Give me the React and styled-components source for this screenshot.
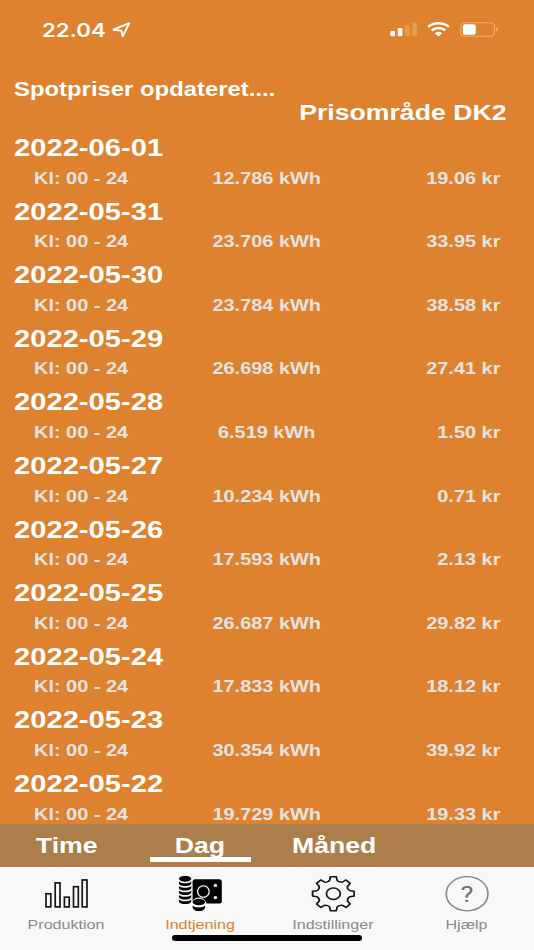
import React, { useState } from 'react'
import styled, { createGlobalStyle } from 'styled-components'

const days = [
  { date: '2022-06-01', energy: '12.786', price: '19.06' },
  { date: '2022-05-31', energy: '23.706', price: '33.95' },
  { date: '2022-05-30', energy: '23.784', price: '38.58' },
  { date: '2022-05-29', energy: '26.698', price: '27.41' },
  { date: '2022-05-28', energy: '6.519', price: '1.50' },
  { date: '2022-05-27', energy: '10.234', price: '0.71' },
  { date: '2022-05-26', energy: '17.593', price: '2.13' },
  { date: '2022-05-25', energy: '26.687', price: '29.82' },
  { date: '2022-05-24', energy: '17.833', price: '18.12' },
  { date: '2022-05-23', energy: '30.354', price: '39.92' },
  { date: '2022-05-22', energy: '19.729', price: '19.33' },
]

const periods = ['Time', 'Dag', 'Måned']

const LocationIcon = () => (
  <svg width="19" height="16" viewBox="0 0 19 16">
    <path d="M17.3 1.2 L10.6 14.2 L9.4 8.6 L1.4 7.7 Z" fill="none" stroke="#fff" strokeWidth="1.9" strokeLinejoin="round" />
  </svg>
)

const SignalIcon = () => (
  <svg width="27" height="15" viewBox="0 0 27 15" fill="#fff">
    <rect x="0.3" y="9" width="4.7" height="5.3" rx="1.1" />
    <rect x="7.7" y="6" width="4.7" height="8.3" rx="1.1" />
    <rect x="15" y="3" width="4.7" height="11.3" rx="1.1" fill="#e69b4d" />
    <rect x="22.2" y="0.3" width="4.7" height="14" rx="1.1" fill="#e69b4d" />
  </svg>
)

const WifiIcon = () => (
  <svg width="23" height="15" viewBox="0 0 23 15" fill="none" stroke="#fff" strokeWidth="2.5">
    <path d="M1.1 4.9 C6.8 0.1 16.2 0.1 21.9 4.9" />
    <path d="M4.7 8.4 C8.6 5.3 14.4 5.3 18.3 8.4" />
    <path d="M7.7 11.2 C10 9.3 13 9.3 15.3 11.2 L11.5 14.5 Z" fill="#fff" stroke="none" />
  </svg>
)

const BatteryIcon = () => (
  <svg width="39" height="15" viewBox="0 0 39 15">
    <rect x="0.7" y="0.7" width="33.8" height="13.5" rx="4" fill="none" stroke="#edb06e" strokeWidth="1.1" />
    <rect x="2.8" y="2.2" width="13" height="10.6" rx="2.3" fill="#fff" />
    <path d="M36 5.3 C38.2 6 38.2 9 36 9.7 Z" fill="#edb06e" />
  </svg>
)

const ChartIcon = () => (
  <svg width="44" height="36" viewBox="-0.6 0 44 36" fill="none" stroke="#161616" strokeWidth="1.7">
    <rect x="1.4" y="17.8" width="4.8" height="13.1" />
    <rect x="10.6" y="6.9" width="4.8" height="24" />
    <rect x="19.8" y="21.2" width="4.8" height="9.7" />
    <rect x="28.9" y="10.7" width="4.8" height="20.2" />
    <rect x="37.6" y="4" width="4.8" height="26.9" />
  </svg>
)

const MoneyIcon = () => (
  <svg width="44" height="36" viewBox="0 0 44 36">
    <rect x="14.6" y="3.2" width="29.2" height="24.3" rx="2.6" fill="#000" />
    <ellipse cx="25.4" cy="15.6" rx="5.8" ry="5.7" fill="none" stroke="#f8f8f8" strokeWidth="1.3" />
    <circle cx="37.4" cy="9.4" r="1.7" fill="#f8f8f8" />
    <circle cx="37.4" cy="21.6" r="1.7" fill="#f8f8f8" />
    <ellipse cx="7.1" cy="2.8" rx="6.2" ry="2.9" />
    {[5.4, 9.9, 14.4, 18.9, 23.4].map(y => (
      <path key={y} d={`M0.9 ${y} C2.4 ${y + 2.4} 11.8 ${y + 2.4} 13.3 ${y} V${y + 2} C12.4 ${y + 5.6} 1.8 ${y + 5.6} 0.9 ${y + 2} Z`} />
    ))}
    <ellipse cx="20.9" cy="29" rx="7.8" ry="7.4" fill="#f8f8f8" />
    <ellipse cx="20.9" cy="26" rx="6.2" ry="3.2" />
    <path d="M14.7 29.6 C16 32.2 25.8 32.2 27.1 29.6 V31.4 C26.3 36.3 15.5 36.3 14.7 31.4 Z" />
  </svg>
)

// the same tooth repeated eight times around the centre
const gearPath = () => {
  const point = (x, y, angle) => {
    const px = x * Math.cos(angle) - y * Math.sin(angle)
    const py = x * Math.sin(angle) + y * Math.cos(angle)
    return `${px.toFixed(2)} ${py.toFixed(2)}`
  }
  let d = ''
  for (let i = 0; i < 8; i++) {
    const a = i * Math.PI / 4
    d += `${i === 0 ? 'M' : 'L'}${point(-2.4, -17, a)} L${point(2.4, -17, a)} L${point(3, -13.6, a)} `
    d += `Q${point(3.2, -12.6, a)} ${point(4.9, -11.9, a)} `
    d += `Q${point(6.3, -11.4, a)} ${point(7.5, -11.7, a)} `
  }
  return d + 'Z'
}

const GearIcon = () => (
  <svg width="44" height="36" viewBox="-18.3 -17.7 36 36" preserveAspectRatio="none" fill="none" stroke="#161616" strokeWidth="1.5" strokeLinejoin="round">
    <path d={gearPath()} />
    <circle r="5.7" />
  </svg>
)

const HelpIcon = () => (
  <svg width="44" height="36" viewBox="-18.1 -17.7 36 36" preserveAspectRatio="none">
    <circle r="17.1" fill="none" stroke="#858585" strokeWidth="1.3" />
    <text y="8.1" textAnchor="middle" fontFamily="Roboto, sans-serif" fontSize="22.5" fontWeight="400" fill="#707070">?</text>
  </svg>
)

const tabs = [
  { label: 'Produktion', icon: <ChartIcon /> },
  { label: 'Indtjening', icon: <MoneyIcon /> },
  { label: 'Indstillinger', icon: <GearIcon /> },
  { label: 'Hjælp', icon: <HelpIcon /> },
]

const App = () => {
  const [period, setPeriod] = useState('Dag')
  const [tab, setTab] = useState('Indtjening')

  return (
    <Screen>
      <GlobalStyle />
      <StatusBar>
        <Clock>22.04</Clock>
        <LocationIcon />
        <StatusIcons>
          <SignalIcon />
          <WifiIcon />
          <BatteryIcon />
        </StatusIcons>
      </StatusBar>
      <Header>
        <Notice>Spotpriser opdateret....</Notice>
        <Area>Prisområde DK2</Area>
      </Header>
      <DayList>
        {days.map(day => (
          <Day key={day.date}>
            <DayTitle>{day.date}</DayTitle>
            <DayRow>
              <Cell $align="left">Kl: 00 - 24</Cell>
              <Cell $align="center">{day.energy} kWh</Cell>
              <Cell $align="right">{day.price} kr</Cell>
            </DayRow>
          </Day>
        ))}
      </DayList>
      <PeriodBar>
        {periods.map(name => (
          <PeriodButton key={name} $active={name === period} onClick={() => setPeriod(name)}>
            <PeriodLabel>{name}</PeriodLabel>
          </PeriodButton>
        ))}
      </PeriodBar>
      <TabBar>
        {tabs.map(({ label, icon }) => (
          <TabButton key={label} $active={label === tab} onClick={() => setTab(label)}>
            {icon}
            <TabLabel>{label}</TabLabel>
          </TabButton>
        ))}
        <HomeIndicator />
      </TabBar>
    </Screen>
  )
}

export default App

const GlobalStyle = createGlobalStyle`
  body {
    margin: 0;
    background: #de822f;
    font-family: "Liberation Sans", Arial, sans-serif;
  }
  svg {
    display: block;
    flex: none;
  }
`

const Screen = styled.div`
  width: 534px;
  height: 950px;
  display: flex;
  flex-direction: column;
  overflow: hidden;
  background: #de822f;
  color: #fff;
`

const StatusBar = styled.div`
  height: 59px;
  box-sizing: border-box;
  padding: 0 35px 0 42px;
  display: flex;
  align-items: center;
  flex: none;
`

/* all lettering is a fifth wider than the font draws it */
const Wide = styled.span`
  display: inline-block;
  white-space: nowrap;
  transform: scaleX(1.2);
  transform-origin: left center;
`

const Clock = styled(Wide)`
  width: 70px;
  font-family: Inter, sans-serif;
  font-size: 19.2px;
  font-weight: 600;
  line-height: 22px;
  transform: scaleX(1.16);
`

const StatusIcons = styled.div`
  margin-left: auto;
  display: flex;
  gap: 10px;
`

const Header = styled.div`
  height: 73px;
  box-sizing: border-box;
  padding: 18.4px 28px 0 13.6px;
  display: flex;
  flex-direction: column;
  flex: none;
`

const Notice = styled(Wide)`
  align-self: flex-start;
  font-size: 19.9px;
  font-weight: 700;
  line-height: 24px;
  transform: scaleX(1.2);
`

const Area = styled(Wide)`
  align-self: flex-end;
  font-size: 22.3px;
  font-weight: 700;
  line-height: 24px;
  transform: scaleX(1.195);
  transform-origin: right center;
`

const DayList = styled.div`
  flex: 1;
  min-height: 0;
  overflow: hidden;
`

const Day = styled.div`
  height: 63.6px;
  padding: 0 33.8px 0 13.6px;
`

const DayTitle = styled(Wide)`
  display: block;
  font-size: 24.3px;
  font-weight: 700;
  line-height: 31.6px;
`

const DayRow = styled.div`
  padding-left: 20.4px;
  display: grid;
  grid-template-columns: repeat(3, 1fr);
`

const Cell = styled(Wide)`
  font-size: 16.6px;
  font-weight: 700;
  line-height: 30.4px;
  color: #e6e4e2;
  text-align: ${({ $align }) => $align};
  transform-origin: ${({ $align }) => $align} center;
`

const PeriodBar = styled.div`
  height: 43px;
  display: grid;
  grid-template-columns: repeat(4, 1fr);
  flex: none;
  background: #ac7e4b;
`

const PeriodButton = styled.button`
  height: 43px;
  padding: 0;
  border: 0;
  background: none;
  color: #fff;
  font: 700 22.2px/43px "Liberation Sans", Arial, sans-serif;
  display: flex;
  flex-direction: column;
  align-items: center;
  &::after {
    content: '';
    width: 101px;
    height: 5px;
    margin-top: -10px;
    flex: none;
    background: ${({ $active }) => $active ? '#fff' : 'transparent'};
  }
`

const PeriodLabel = styled(Wide)`
  transform-origin: center;
`

const TabBar = styled.div`
  position: relative;
  height: 83px;
  box-sizing: border-box;
  border-top: 1px solid #fff;
  display: grid;
  grid-template-columns: repeat(4, 1fr);
  flex: none;
  background: #f8f8f8;
`

const TabButton = styled.button`
  padding: 8px 1px 0 0;
  border: 0;
  background: none;
  color: ${({ $active }) => $active ? '#e08428' : '#8a8a8a'};
  font: 400 13.4px/16px "Liberation Sans", Arial, sans-serif;
  display: flex;
  flex-direction: column;
  align-items: center;
  gap: 5px;
`

const TabLabel = styled(Wide)`
  transform-origin: center;
`

const HomeIndicator = styled.div`
  position: absolute;
  left: 172px;
  bottom: 9px;
  width: 190px;
  height: 6px;
  border-radius: 3px;
  background: #000;
`
